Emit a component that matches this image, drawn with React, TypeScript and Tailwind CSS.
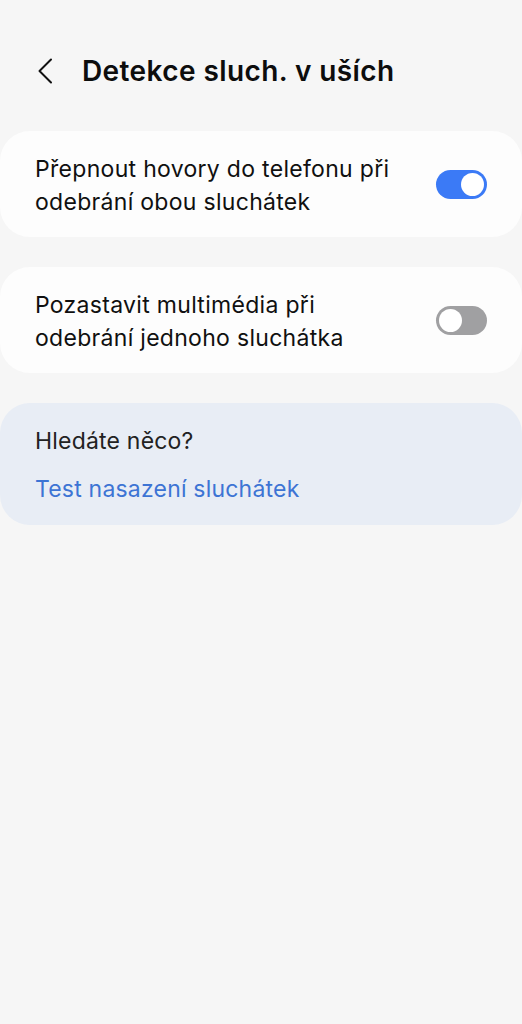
import React, { useState } from 'react';

const Toggle: React.FC<{ on: boolean; onChange: () => void }> = ({ on, onChange }) => (
  <button
    onClick={onChange}
    className={`relative w-[51px] h-[29px] rounded-full shrink-0 ${on ? 'bg-[#3b7af6]' : 'bg-[#a0a0a2]'}`}
  >
    <span
      className={`absolute top-[3px] w-[23px] h-[23px] rounded-full bg-white ${on ? 'left-[25px]' : 'left-[3px]'}`}
    />
  </button>
);

const SettingRow: React.FC<{ label: string[]; on: boolean; onChange: () => void }> = ({ label, on, onChange }) => (
  <div className="bg-[#fdfdfd] rounded-[30px] h-[106px] flex items-center justify-between pl-[35px] pr-[35px]">
    <p className="text-[23px] leading-[33px] tracking-[0.3px] text-[#101010] pt-[3px]">
      {label.map((l, i) => (
        <span key={i} className="block">{l}</span>
      ))}
    </p>
    <Toggle on={on} onChange={onChange} />
  </div>
);

export default function App() {
  const [calls, setCalls] = useState(true);
  const [media, setMedia] = useState(false);

  return (
    <div className="min-h-[1024px] bg-[#f6f6f6]" style={{ fontFamily: 'Inter, "Noto Sans", sans-serif' }}>
      <header className="flex items-center h-[140px] pl-[36px] pt-[1px]">
        <svg width="18" height="26" viewBox="0 0 18 26" fill="none" className="mr-[28px]">
          <path d="M15 1.5 L3.5 13 L15 24.5" stroke="#111" strokeWidth="2" strokeLinecap="round" strokeLinejoin="round" />
        </svg>
        <h1 className="text-[28px] font-semibold text-[#0d0d0d] tracking-[0.4px]">Detekce sluch. v uších</h1>
      </header>

      <div className="flex flex-col gap-[30px] mt-[-9px]">
        <SettingRow
          label={['Přepnout hovory do telefonu při', 'odebrání obou sluchátek']}
          on={calls}
          onChange={() => setCalls(!calls)}
        />
        <SettingRow
          label={['Pozastavit multimédia při', 'odebrání jednoho sluchátka']}
          on={media}
          onChange={() => setMedia(!media)}
        />
        <div className="bg-[#e8edf5] rounded-[30px] h-[122px] flex flex-col justify-center pl-[35px] gap-[18px] pt-[2px]">
          <p className="text-[23px] leading-[30px] tracking-[0.2px] text-[#222]">Hledáte něco?</p>
          <a className="text-[23px] leading-[30px] tracking-[0.2px] text-[#3d74d4]">Test nasazení sluchátek</a>
        </div>
      </div>
    </div>
  );
}
